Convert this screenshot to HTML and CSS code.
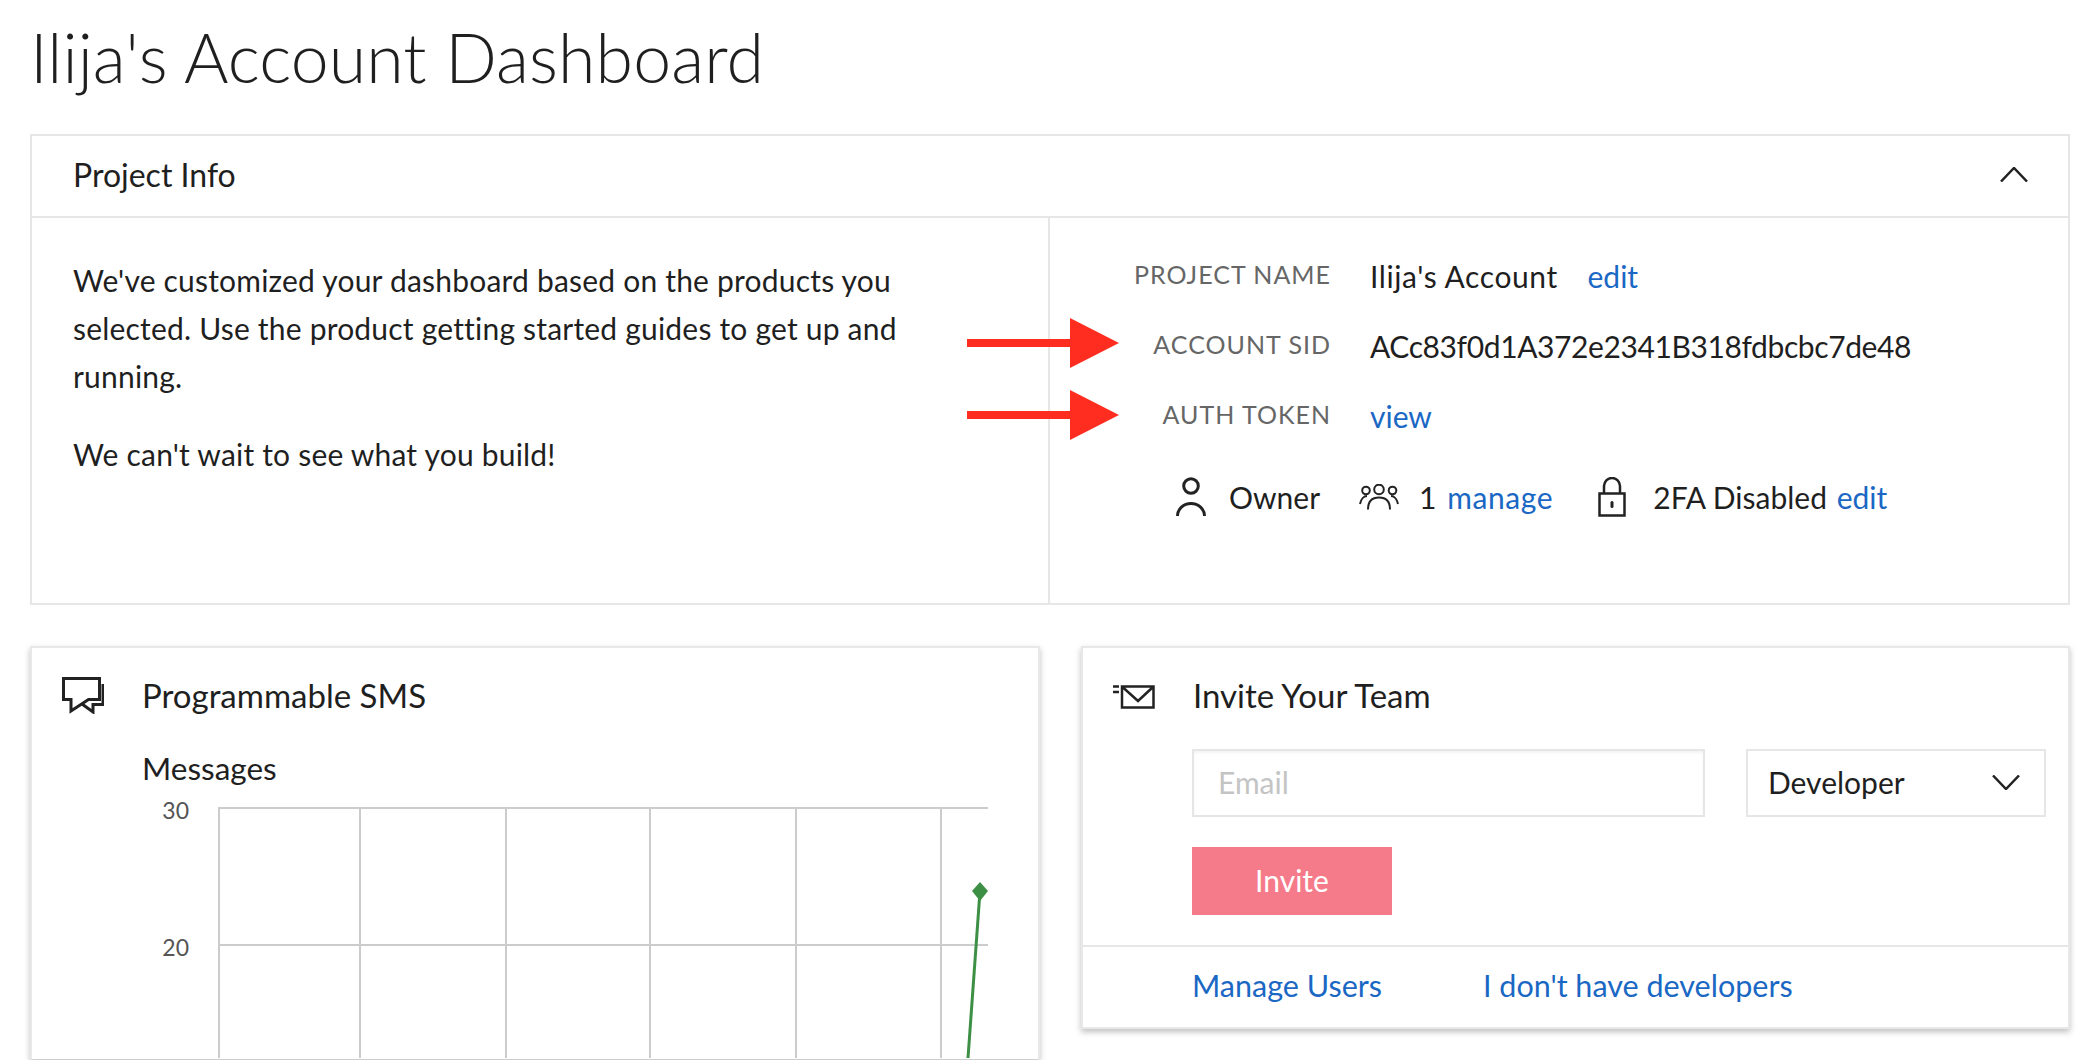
FILE: index.html
```html
<!DOCTYPE html>
<html lang="en">

<head>
    <meta charset="UTF-8">
    <meta name="viewport" content="width=device-width, initial-scale=1.0">
    <title>Ilija's Account Dashboard</title>
    <link rel="stylesheet" href="styles.css">
</head>

<body>
    <h1 class="page-title">Ilija's Account Dashboard</h1>

    <section class="panel">
        <div class="panel-head">
            <span>Project Info</span>
            <svg class="chevron" width="28" height="15" viewBox="0 0 28 15"><path d="M1 14.5 14 1l13 13.5" /></svg>
        </div>
        <div class="panel-body">
            <div class="intro">
                <p>We've customized your dashboard based on the products you selected. Use the product getting started guides to get up and running.</p>
                <p>We can't wait to see what you build!</p>
            </div>
            <div class="info">
                <div class="info-row">
                    <span class="info-label">PROJECT NAME</span>
                    <span class="info-value"><span class="project-name">Ilija's Account</span> <a class="edit-link" href="#">edit</a></span>
                </div>
                <div class="info-row">
                    <span class="info-label">ACCOUNT SID</span>
                    <span class="info-value sid">ACc83f0d1A372e2341B318fdbcbc7de48</span>
                </div>
                <div class="info-row">
                    <span class="info-label">AUTH TOKEN</span>
                    <span class="info-value"><a href="#">view</a></span>
                </div>
                <div class="meta">
                    <svg class="icon person" width="30" height="40" viewBox="0 0 30 40"><circle cx="15" cy="9" r="7.3" /><path d="M1.5 39a13.5 12.5 0 0 1 27 0" /></svg>
                    <span class="meta-owner">Owner</span>
                    <svg class="icon group" width="40" height="26" viewBox="0 0 40 26"><circle cx="7" cy="6.5" r="3.8" /><circle cx="20" cy="5.5" r="4.8" /><circle cx="33.5" cy="6.5" r="3.8" /><path d="M1 20c1-5 4-8 7-8M39 20c-1-5-4-8-7-8M9 25.500c0-8 4-12 11-12s11 4 11 12" /></svg>
                    <span class="meta-count">1 <a href="#">manage</a></span>
                    <svg class="icon lock" width="28" height="40" viewBox="0 0 28 40"><path d="M1.500 16.500h25v22h-25zM6 16.500V9a8 8 0 0 1 16 0v7.500" /><path class="keyhole" d="M14 25.500v4" /></svg>
                    <span class="meta-fa">2FA Disabled <a href="#">edit</a></span>
                </div>
            </div>
        </div>
        <div class="arrow arrow-sid"><span class="arrow-shaft"></span><span class="arrow-head"></span></div>
        <div class="arrow arrow-token"><span class="arrow-shaft"></span><span class="arrow-head"></span></div>
    </section>

    <div class="cards">
        <section class="card sms-card">
            <div class="card-title">
                <svg class="card-icon" width="42" height="37" viewBox="0 0 42 37"><path d="M1.500 1.500h36v21H26.500L9 34v-11.500H1.500z" /><path d="M41 7v20.500H31V35l-11-8" /></svg>
                <span>Programmable SMS</span>
            </div>
            <div class="chart">
                <div class="chart-title">Messages</div>
                <div class="plot">
                    <div class="y-labels"><span>30</span><span>20</span></div>
                    <svg class="plot-svg" width="771" height="251" viewBox="0 0 771 251">
                        <path class="grid-v" d="M1 1v250M142 1v250M288 1v250M432 1v250M578 1v250M723 1v250" />
                        <path class="grid-h" d="M0 1h770M0 138h770" />
                        <path class="series" d="M762 84 750 251" />
                        <path class="marker" d="M762 75l8 9-8 10-8-10z" />
                    </svg>
                </div>
            </div>
        </section>

        <section class="card invite-card">
            <div class="invite-main">
                <div class="card-title">
                    <svg class="card-icon mail" width="42" height="24" viewBox="0 0 42 24"><path d="M9 1.500h31.500v21H9zM9.500 2 25 16 40 2" /><path d="M0 1.500h6M0 7h6" /></svg>
                    <span>Invite Your Team</span>
                </div>
                <div class="invite-form">
                    <input class="email-input" type="text" placeholder="Email">
                    <div class="role-select">
                        <span>Developer</span>
                        <svg class="chevron" width="28" height="15" viewBox="0 0 28 15"><path d="M1 .5 14 14 27 .5" /></svg>
                    </div>
                </div>
                <button class="invite-btn" type="button">Invite</button>
            </div>
            <div class="invite-foot">
                <a href="#">Manage Users</a>
                <a href="#">I don't have developers</a>
            </div>
        </section>
    </div>
</body>

</html>
```

FILE: styles.css
```css
html, body {
    height: 1060px;
    overflow: hidden;
}

body {
    margin: 0;
    padding: 0 12px 0 30px;
    background: #fff;
    font-family: Lato, "Open Sans", sans-serif;
    font-size: 30px;
    color: #1f1f1f;
}

a {
    color: #1a68c4;
    text-decoration: none;
}

svg {
    flex: none;
    display: block;
    fill: none;
    stroke: #222;
}

h1, p {
    margin: 0;
}

.page-title {
    height: 134px;
    padding-top: 14px;
    box-sizing: border-box;
    font-size: 68px;
    font-weight: 300;
    letter-spacing: 0.1px;
    line-height: 86px;
}

.panel {
    position: relative;
    height: 471px;
    box-sizing: border-box;
    border: 2px solid #e6e6e6;
}

.panel-head {
    height: 76px;
    padding: 0 40px 4px 41px;
    display: flex;
    align-items: center;
    justify-content: space-between;
    border-bottom: 2px solid #e6e6e6;
    font-size: 32px;
}

.panel-body {
    display: grid;
    grid-template-columns: 1018px 1fr;
    height: 387px;
}

.intro {
    padding: 38px 110px 0 41px;
    line-height: 48px;
    letter-spacing: 0.2px;
    border-right: 2px solid #e6e6e6;
}

.intro p {
    margin-bottom: 30px;
}

.info {
    padding-top: 21px;
}

.info-row {
    display: grid;
    grid-template-columns: 281px 1fr;
    column-gap: 39px;
    align-items: center;
    height: 70px;
}

.info-label {
    text-align: right;
    font-size: 25px;
    letter-spacing: 1px;
    color: #666;
}

.info-value {
    padding-top: 3px;
}

.project-name {
    letter-spacing: 0.6px;
}

.sid {
    letter-spacing: -0.4px;
}

.edit-link {
    margin-left: 22px;
}

.meta {
    display: flex;
    align-items: center;
    margin-top: 28px;
    padding-left: 126px;
}

.meta .icon {
    stroke-width: 3;
}

.meta .group {
    stroke-width: 2;
}

.meta .lock {
    stroke-width: 2.5;
}

.meta-owner {
    margin: 0 39px 0 23px;
}

.meta-count {
    margin: 0 45px 0 20px;
}

.meta-count a {
    margin-left: 3px;
    letter-spacing: 0.6px;
}

.meta-fa {
    margin-left: 27px;
}

.meta-fa a {
    margin-left: 2px;
}

.keyhole {
    stroke-linecap: round;
    stroke-width: 3;
}

.chevron path {
    stroke-width: 2.5;
}

/* red annotation arrows lie over the panel */
.arrow {
    position: absolute;
    left: 935px;
    display: flex;
    align-items: center;
}

.arrow-sid {
    top: 182px;
}

.arrow-token {
    top: 254px;
}

.arrow-shaft {
    width: 103px;
    height: 8px;
    background: #ff2d20;
}

.arrow-head {
    width: 0;
    height: 0;
    border-top: 25px solid transparent;
    border-bottom: 25px solid transparent;
    border-left: 49px solid #ff2d20;
}

.cards {
    display: grid;
    grid-template-columns: 1010px 989px;
    column-gap: 41px;
    margin-top: 41px;
    align-items: start;
}

.card {
    box-sizing: border-box;
    border: 2px solid #e8e8e8;
    box-shadow: 0 3px 6px rgba(0, 0, 0, 0.25);
}

/* runs off the bottom of the window */
.sms-card {
    height: 413px;
    padding: 29px 0 0 30px;
    border-bottom: none;
}

.card-title {
    display: flex;
    align-items: center;
    gap: 38px;
    height: 36px;
    font-size: 33px;
}

.card-icon path {
    stroke-width: 3;
}

.card-icon.mail {
    margin-top: 4px;
}

.card-icon.mail path {
    stroke-width: 2.5;
}

.chart {
    padding-left: 80px;
    margin-top: 35px;
}

.chart-title {
    height: 40px;
    line-height: 40px;
    font-size: 31.5px;
}

.plot {
    display: flex;
    margin-top: 19px;
}

.y-labels {
    display: flex;
    flex-direction: column;
    width: 45px;
    margin-left: 2px;
    gap: 107px;
    margin-top: -12px;
    text-align: right;
    font-size: 23px;
    line-height: 30px;
    color: #555;
}

.plot-svg {
    margin-left: 29px;
}

.grid-v {
    stroke: #ccc;
    stroke-width: 2;
}

.grid-h {
    stroke: #ccc;
    stroke-width: 2;
}

.series {
    stroke: #3d8f45;
    stroke-width: 3;
}

.marker {
    fill: #3d8f45;
    stroke: none;
}

.invite-card {
    height: 383px;
}

.invite-main {
    height: 299px;
    box-sizing: border-box;
    padding: 29px 0 0 30px;
    border-bottom: 2px solid #e6e6e6;
}

.invite-form {
    display: flex;
    gap: 41px;
    margin: 36px 0 30px 79px;
}

.email-input {
    width: 513px;
    height: 68px;
    box-sizing: border-box;
    padding: 0 24px 2px;
    border: 2px solid #e6e6e6;
    box-shadow: inset 0 2px 3px rgba(0, 0, 0, 0.05);
    border-radius: 0;
    outline: none;
    font: inherit;
}

.email-input::placeholder {
    color: #c4c4c4;
}

.role-select {
    display: flex;
    align-items: center;
    justify-content: space-between;
    width: 300px;
    height: 68px;
    box-sizing: border-box;
    padding: 0 24px 2px 20px;
    border: 2px solid #e6e6e6;
}

.invite-btn {
    display: block;
    width: 200px;
    height: 68px;
    margin-left: 79px;
    padding-bottom: 4px;
    border: none;
    background: #f57a8a;
    color: #fff;
    font: inherit;
}

.invite-foot {
    display: flex;
    align-items: center;
    gap: 101px;
    height: 75px;
    padding: 0 0 5px 109px;
    font-size: 30.5px;
}
```
